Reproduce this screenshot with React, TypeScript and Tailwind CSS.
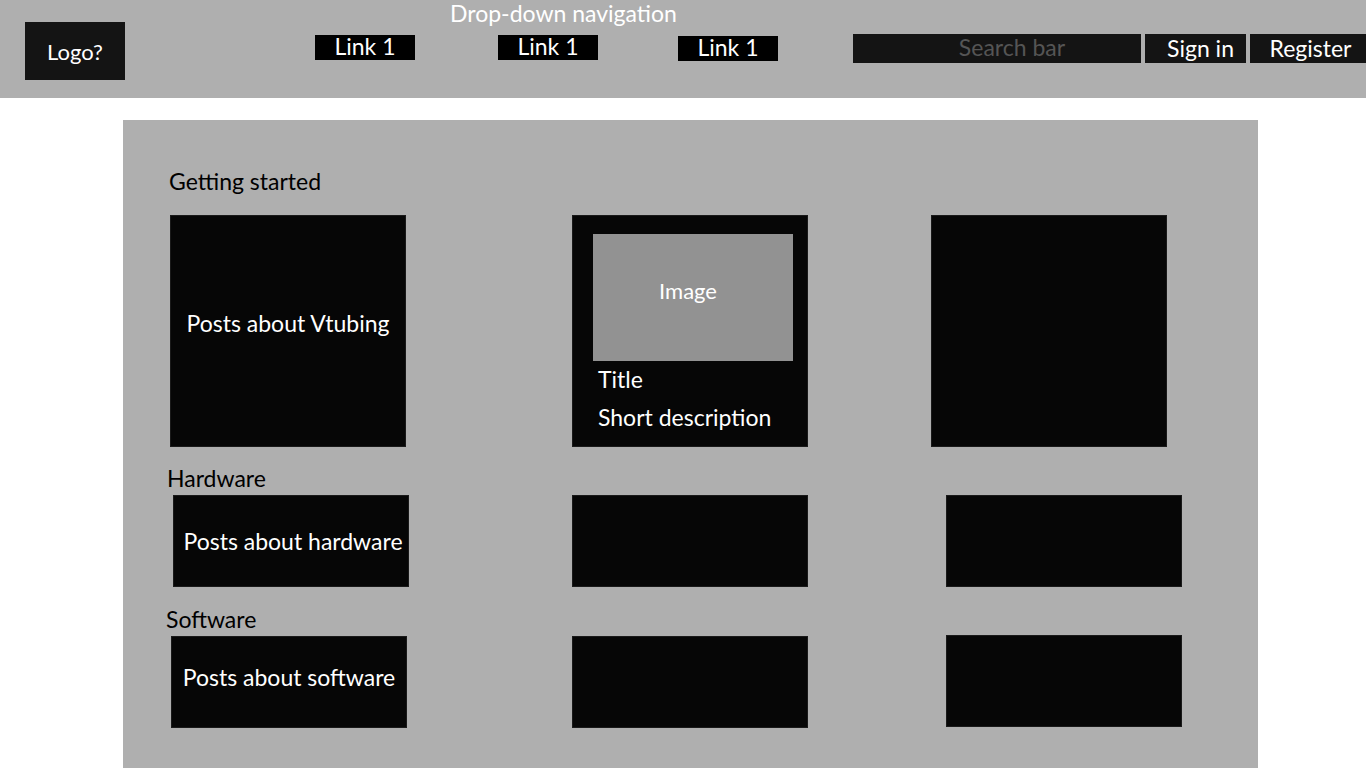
import React from 'react';

const font = { fontFamily: 'Lato, "Open Sans", sans-serif' };

function Card({ className, children }: { className: string; children?: React.ReactNode }) {
  return (
    <div className={`bg-[#060606] border border-[#1a1a1a] shrink-0 ${className}`}>
      {children}
    </div>
  );
}

function Label({ text, className }: { text: string; className: string }) {
  return <div className={`text-[23px] leading-[24px] text-black ${className}`}>{text}</div>;
}

export default function App() {
  return (
    <div className="min-h-screen bg-white" style={font}>
      {/* Header */}
      <header className="h-[98px] bg-[#afafaf] flex items-start">
        <div className="ml-[25px] mt-[22px] w-[100px] h-[58px] bg-[#141414] text-white text-[22px] flex items-center justify-center">
          Logo?
        </div>

        {/* Nav */}
        <div className="ml-[190px] flex flex-col">
          <div className="ml-[135px] text-white text-[23px] leading-[26px] whitespace-nowrap">
            Drop-down navigation
          </div>
          <div className="mt-[9px] flex items-start">
            <a className="w-[100px] h-[25px] bg-black text-white text-[23px] leading-[22px] flex justify-center">Link 1</a>
            <a className="ml-[83px] w-[100px] h-[25px] bg-black text-white text-[23px] leading-[22px] flex justify-center">Link 1</a>
            <a className="ml-[80px] mt-[1px] w-[100px] h-[25px] bg-black text-white text-[23px] leading-[22px] flex justify-center">Link 1</a>
          </div>
        </div>

        {/* Search + auth */}
        <div className="ml-[75px] mt-[34px] flex gap-[4px] flex-1">
          <div className="w-[288px] h-[29px] bg-[#141414] text-[#555555] text-[23px] leading-[27px] text-center pl-[30px]">
            Search bar
          </div>
          <button className="w-[101px] h-[29px] bg-[#141414] text-white text-[23px] leading-[27px] pl-[10px]">Sign in</button>
          <button className="flex-1 h-[29px] bg-[#141414] text-white text-[23px] leading-[27px] pl-[5px]">Register</button>
        </div>
      </header>

      {/* Content panel */}
      <main className="mt-[22px] ml-[123px] w-[1135px] bg-[#afafaf] pt-[49px] pb-[60px]">
        <Label text="Getting started" className="ml-[46px]" />
        <div className="mt-[22px] ml-[47px] flex">
          <Card className="w-[236px] h-[232px] flex items-center justify-center pb-[16px]">
            <span className="text-white text-[23px]">Posts about Vtubing</span>
          </Card>
          <Card className="ml-[166px] w-[236px] h-[232px] pt-[18px] px-[20px]">
            <div className="w-[200px] h-[127px] bg-[#929292] flex justify-center pt-[42px]">
              <span className="text-white text-[22px] leading-[30px] -ml-[10px]">Image</span>
            </div>
            <div className="ml-[5px] mt-[3px] text-white text-[23px] leading-[30px]">Title</div>
            <div className="ml-[5px] mt-[8px] text-white text-[23px] leading-[30px] whitespace-nowrap">Short description</div>
          </Card>
          <Card className="ml-[123px] w-[236px] h-[232px]" />
        </div>

        <Label text="Hardware" className="ml-[44px] mt-[19px]" />
        <div className="mt-[5px] ml-[50px] flex">
          <Card className="w-[236px] h-[92px] flex items-center justify-center pl-[4px]">
            <span className="text-white text-[23px]">Posts about hardware</span>
          </Card>
          <Card className="ml-[163px] w-[236px] h-[92px]" />
          <Card className="ml-[138px] w-[236px] h-[92px]" />
        </div>

        <Label text="Software" className="ml-[43px] mt-[20px]" />
        <div className="mt-[5px] ml-[48px] flex items-start">
          <Card className="w-[236px] h-[92px] flex items-center justify-center pb-[10px]">
            <span className="text-white text-[23px]">Posts about software</span>
          </Card>
          <Card className="ml-[165px] w-[236px] h-[92px]" />
          <Card className="ml-[138px] -mt-[1px] w-[236px] h-[92px]" />
        </div>
      </main>
    </div>
  );
}
